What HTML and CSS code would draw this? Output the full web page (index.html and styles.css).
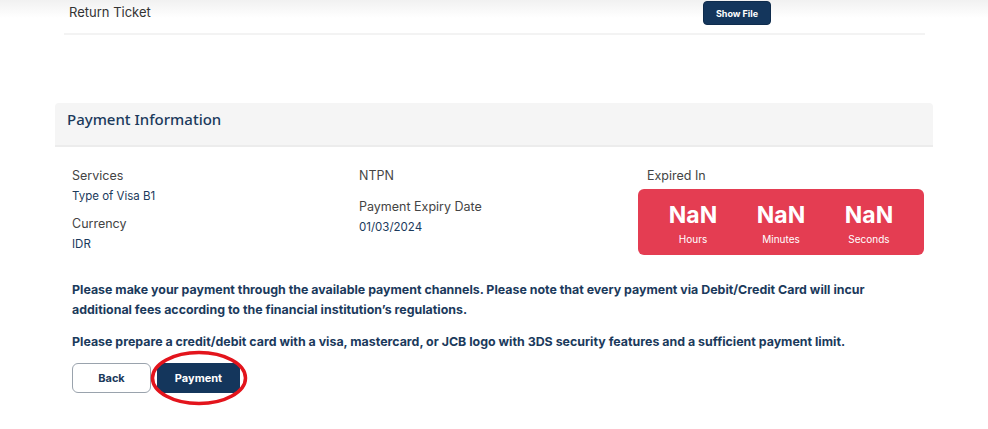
FILE: index.html
```html
<!DOCTYPE html>
<html>
<head>
<meta charset="utf-8">
<link rel="stylesheet" href="styles.css">
</head>
<body>
<div class="top-shade">
  <div class="doc-row">
    <span class="doc-name">Return Ticket</span>
    <button class="btn-small">Show File</button>
  </div>
</div>

<section class="panel">
  <div class="panel-head">Payment Information</div>
  <div class="panel-body">
    <div class="col">
      <div class="label">Services</div>
      <div class="value">Type of Visa B1</div>
      <div class="label label-gap">Currency</div>
      <div class="value">IDR</div>
    </div>
    <div class="col">
      <div class="label">NTPN</div>
      <div class="label label-gap2">Payment Expiry Date</div>
      <div class="value">01/03/2024</div>
    </div>
    <div class="col">
      <div class="label label-indent">Expired In</div>
      <div class="timer">
        <div class="unit"><span class="num">NaN</span><span class="cap">Hours</span></div>
        <div class="unit"><span class="num">NaN</span><span class="cap">Minutes</span></div>
        <div class="unit"><span class="num">NaN</span><span class="cap">Seconds</span></div>
      </div>
    </div>
  </div>
  <p class="note">Please make your payment through the available payment channels. Please note that every payment via Debit/Credit Card will incur additional fees according to the financial institution’s regulations.</p>
  <p class="note">Please prepare a credit/debit card with a visa, mastercard, or JCB logo with 3DS security features and a sufficient payment limit.</p>
  <div class="actions">
    <button class="btn btn-outline">Back</button>
    <div class="circled">
      <button class="btn btn-primary">Payment</button>
      <svg class="ring" width="98" height="56" viewBox="0 0 98 56"><ellipse cx="49" cy="28" rx="46.5" ry="25.5" fill="none" stroke="#e3141c" stroke-width="3.5"/></svg>
    </div>
  </div>
</section>
</body>
</html>
```
FILE: styles.css
```css
* { box-sizing: border-box; }
html, body { margin: 0; padding: 0; background: #fff; }
body { font-family: Inter, "Noto Sans", sans-serif; color: #333; padding-bottom: 40px; }

.top-shade {
  background: linear-gradient(#f1f1f1 0, #fff 18px);
  padding: 0 63px 0 64px;
}
.doc-row {
  display: flex;
  align-items: center;
  height: 35px;
  padding: 0 0 9px 5px;
  border-bottom: 2px solid #f3f3f3;
}
.doc-name { font-size: 13px; color: #333; width: 634px; }
.btn-small {
  width: 68px; height: 24px;
  background: #14365c; color: #fff;
  border: 1px solid #0f2c4d;
  border-radius: 4px;
  font-family: Inter, sans-serif; font-size: 9px; font-weight: 700;
  margin-top: 2px;
}

.panel { margin: 68px 55px 0 55px; }
.panel-head {
  height: 44px;
  background: #f5f5f5;
  border-radius: 4px 4px 0 0;
  border-bottom: 2px solid #ececec;
  padding: 6px 0 0 12px;
  font-family: "Noto Sans", "Open Sans", sans-serif;
  font-size: 15px; font-weight: 500; color: #1b3a5c;
}
.panel-body {
  display: grid;
  grid-template-columns: 287px 279px 286px;
  padding: 20px 0 0 17px;
}
.label { font-size: 12.5px; color: #444; line-height: 18px; }
.value { font-size: 11.5px; color: #1b3a5c; line-height: 18px; margin-top: 2px; }
.label-gap { margin-top: 10px; }
.label-gap2 { margin-top: 13px; }
.label-indent { padding-left: 9px; }
.timer {
  margin-top: 4px;
  height: 66px;
  background: #e43d52;
  border-radius: 6px;
  display: grid;
  grid-template-columns: repeat(3, 1fr);
  padding: 12px 11px 0 11px;
}
.unit { display: flex; flex-direction: column; align-items: center; }
.num { color: #fff; font-size: 23px; font-weight: 700; line-height: 28px; }
.cap { color: #fff; font-size: 10px; margin-top: 4px; }

.note {
  margin: 0; padding: 0 10px 0 17px;
  font-size: 12.4px; font-weight: 700; color: #1b3a5c;
  line-height: 20px;
}
.panel-body + .note { margin-top: 25px; }
.note + .note { margin-top: 12px; }

.actions { display: flex; gap: 6px; padding: 11px 0 0 17px; }
.btn {
  height: 30px; border-radius: 6px;
  font-family: Inter, sans-serif; font-size: 11px; font-weight: 700;
}
.btn-outline { width: 79px; background: #fff; color: #1b3a5c; border: 1px solid #9aa3ad; }
.circled { position: relative; }
.btn-primary { width: 83px; background: #14365c; color: #fff; border: 1px solid #14365c; }
.ring { position: absolute; left: -7px; top: -13px; pointer-events: none; }
```
